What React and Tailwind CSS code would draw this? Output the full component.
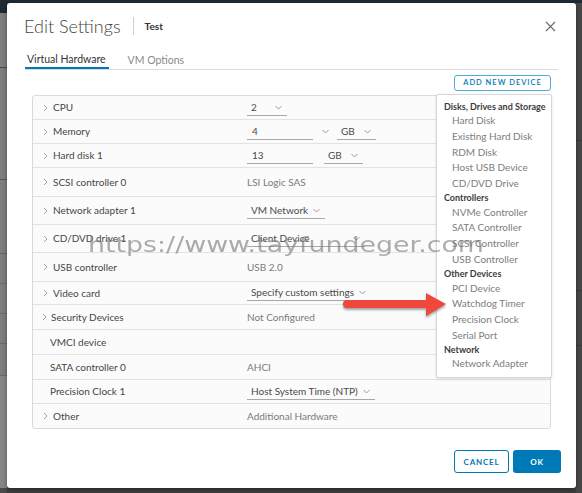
import React from "react";

const ui = { fontFamily: "Lato, 'Liberation Sans', sans-serif" };

function ChevronRight() {
  return (
    <svg width="5" height="8" viewBox="0 0 5 8" className="shrink-0">
      <polyline points="1,1 4,4 1,7" fill="none" stroke="#a3a3a3" strokeWidth="1" />
    </svg>
  );
}

function ChevronDown() {
  return (
    <svg width="7" height="5" viewBox="0 0 7 5" className="shrink-0">
      <polyline points="0.5,1 3.5,4 6.5,1" fill="none" stroke="#9a9a9a" strokeWidth="1" />
    </svg>
  );
}

// underlined select, like the clarity form controls
function Select({ text, w, spread }) {
  return (
    <div
      className={`flex h-[16px] items-center gap-[5px] border-b border-[#a8a8a8] pl-[4px] pr-[5px] text-[#4a4a4a] ${spread ? "justify-between" : ""}`}
      style={w ? { width: w } : undefined}
    >
      <span>{text}</span>
      <ChevronDown />
    </div>
  );
}

function Input({ text }) {
  return (
    <div className="flex h-[16px] w-[66px] items-center border-b border-[#a8a8a8] pl-[5px] text-[#4a4a4a]">
      {text}
    </div>
  );
}

function Plain({ text }) {
  return <span className="text-[#7a7a7a]">{text}</span>;
}

const rows = [
  { label: "CPU", chev: true, h: 24, value: <Select text="2" w={40} spread /> },
  {
    label: "Memory",
    chev: true,
    h: 24,
    value: (
      <div className="flex items-center">
        <Input text="4" />
        <div className="ml-[9px] mr-[8px]">
          <ChevronDown />
        </div>
        <Select text="GB" w={39} spread />
      </div>
    ),
  },
  {
    label: "Hard disk 1",
    chev: true,
    h: 24,
    value: (
      <div className="flex items-center gap-[11px]">
        <Input text="13" />
        <Select text="GB" w={39} spread />
      </div>
    ),
  },
  { label: "SCSI controller 0", chev: true, h: 29, value: <Plain text="LSI Logic SAS" /> },
  { label: "Network adapter 1", chev: true, h: 28, value: <Select text="VM Network" /> },
  { label: "CD/DVD drive 1", chev: true, h: 28, value: <Select text="Client Device" w={118} spread /> },
  { label: "USB controller", chev: true, h: 29, value: <Plain text="USB 2.0" /> },
  { label: "Video card", chev: true, h: 23, value: <Select text="Specify custom settings" /> },
  { label: "Security Devices", chev: true, h: 25, tight: true, value: <Plain text="Not Configured" /> },
  { label: "VMCI device", h: 25 },
  { label: "SATA controller 0", h: 25, value: <Plain text="AHCI" /> },
  { label: "Precision Clock 1", h: 24, value: <Select text="Host System Time (NTP)" /> },
  { label: "Other", chev: true, h: 24, last: true, value: <Plain text="Additional Hardware" /> },
];

const menu = [
  { head: "Disks, Drives and Storage" },
  "Hard Disk",
  "Existing Hard Disk",
  "RDM Disk",
  "Host USB Device",
  "CD/DVD Drive",
  { head: "Controllers" },
  "NVMe Controller",
  "SATA Controller",
  "SCSI Controller",
  "USB Controller",
  { head: "Other Devices" },
  "PCI Device",
  "Watchdog Timer",
  "Precision Clock",
  "Serial Port",
  { head: "Network" },
  "Network Adapter",
];

function HardwareRow({ row }) {
  return (
    <div
      className={`flex items-center ${row.last ? "" : "border-b border-[#e3e3e3]"}`}
      style={{ height: row.h }}
    >
      <div className={`flex w-[214px] items-center ${row.chev ? (row.tight ? "pl-[9px] gap-[4px]" : "pl-[10px] gap-[5px]") : "pl-[17px]"} text-[#454545]`}>
        {row.chev && <ChevronRight />}
        <span>{row.label}</span>
      </div>
      <div className="flex items-center">{row.value}</div>
    </div>
  );
}

function AddDeviceMenu() {
  return (
    <div className="absolute left-[429px] top-[91px] w-[116px] rounded-[2px] border border-[#d7d7d7] bg-white py-[5px] shadow-[0_1px_3px_rgba(0,0,0,0.12)]">
      {menu.map((m, i) =>
        typeof m === "string" ? (
          <div key={i} className="flex h-[15.7px] items-center pl-[15px] text-[10px] text-[#7d7d7d]">
            {m}
          </div>
        ) : (
          <div key={i} className="flex h-[13px] items-center pl-[7px] text-[9px] font-bold text-[#3c3c3c]">
            {m.head}
          </div>
        )
      )}
    </div>
  );
}

function Arrow() {
  return (
    <svg
      width="110"
      height="30"
      viewBox="0 0 110 30"
      className="absolute left-[333px] top-[287px] drop-shadow-[0_2px_1px_rgba(0,0,0,0.35)]"
    >
      <rect x="3" y="10" width="88" height="8" rx="4" fill="#f0483c" />
      <polygon points="86,3 106,14 86,26" fill="#f0483c" />
    </svg>
  );
}

function Modal() {
  return (
    <div className="relative flex h-[485px] w-[569px] flex-col rounded-[3px] bg-white text-[10px] shadow-[0_1px_4px_rgba(0,0,0,0.4)]" style={ui}>
      {/* header */}
      <div className="h-[46px] pl-[17px] pr-[16px] pt-[9px]">
        <div className="flex h-[28px] items-center">
          <span className="text-[18px] font-light text-[#444]">Edit Settings</span>
          <div className="ml-[12px] mr-[11px] h-[18px] w-px bg-[#cfcfcf]" />
          <span className="text-[10px] font-bold text-[#333]">Test</span>
          <svg width="11" height="11" viewBox="0 0 11 11" className="ml-auto mr-[4px]">
            <path d="M1 1L10 10M10 1L1 10" stroke="#6a6a6a" strokeWidth="1.1" />
          </svg>
        </div>
      </div>

      {/* tabs */}
      <div className="mx-[18px] flex h-[21px] border-b border-[#dcdcdc] text-[10.5px]">
        <div className="flex h-[20px] items-center border-b-2 border-[#0079b8] pl-[2px] pr-[3px] pt-[3px] text-[#333]">
          Virtual Hardware
        </div>
        <div className="ml-[17px] flex h-[20px] items-center pl-[2px] pt-[3px] text-[#8a8a8a]">VM Options</div>
      </div>

      {/* body */}
      <div className="px-[25px]">
        <div className="mt-[5px] flex justify-end">
          <button className="flex h-[16px] w-[97px] items-center justify-center rounded-[3px] border border-[#4aaed9] text-[7.5px] font-semibold tracking-[0.13em] text-[#0079b8]">
            ADD NEW DEVICE
          </button>
        </div>
        <div className="mt-[4px] rounded-[3px] border border-[#dadada] bg-[#fbfbfb]">
          {rows.map((r) => (
            <HardwareRow key={r.label} row={r} />
          ))}
        </div>
      </div>

      {/* footer */}
      <div className="mt-auto flex justify-end gap-[4px] pb-[15px] pr-[15px]">
        <button className="h-[23px] w-[55px] rounded-[3px] border border-[#0079b8] text-[8px] font-bold tracking-[0.1em] text-[#0079b8]">
          CANCEL
        </button>
        <button className="h-[23px] w-[48px] rounded-[3px] bg-[#0079b8] text-[8px] font-bold tracking-[0.1em] text-white">
          OK
        </button>
      </div>

      <AddDeviceMenu />
      <Arrow />

      {/* watermark */}
      <div
        className="pointer-events-none absolute left-[81px] top-[231px] origin-left scale-x-[1.22] text-[22px] leading-none text-[#777]/60"
        style={{ fontFamily: "'DejaVu Sans', sans-serif" }}
      >
        https://www.tayfundeger.com
      </div>
    </div>
  );
}

export default function App() {
  return (
    <div className="flex h-[493px] w-[582px] overflow-hidden bg-[#3d3d3d]">
      {/* dimmed page behind, left */}
      <div className="flex w-[7px] flex-col bg-[#7d7d7d]">
        <div className="h-[13px] bg-[#1e2b37]" />
        <div className="h-[55px] border-b border-[#4a4a4a]" />
        <div className="h-[112px] border-b border-[#555]" />
        <div className="h-[74px] border-b border-[#666]" />
        <div className="h-[30px] border-b border-[#6a6a6a]" />
        <div className="h-[30px] border-b border-[#6a6a6a]" />
        <div className="h-[30px] border-b border-[#6a6a6a]" />
        <div className="h-[32px] border-b border-[#6a6a6a]" />
        <div className="flex-1 bg-[#858585]" />
        <div className="h-[5px] bg-[#4a4a4a]" />
      </div>

      <div className="flex flex-col">
        <div className="h-[3px] bg-[#1e2b37]" />
        <Modal />
      </div>

      {/* dimmed page behind, right */}
      <div className="flex flex-1 flex-col bg-[#474747]">
        <div className="h-[3px] bg-[#1e2b37]" />
        <div className="h-[138px] border-b border-[#3a3a3a]" />
        <div className="h-[150px] border-b border-[#3a3a3a]" />
        <div className="h-[55px] border-b border-[#3a3a3a]" />
      </div>
    </div>
  );
}
